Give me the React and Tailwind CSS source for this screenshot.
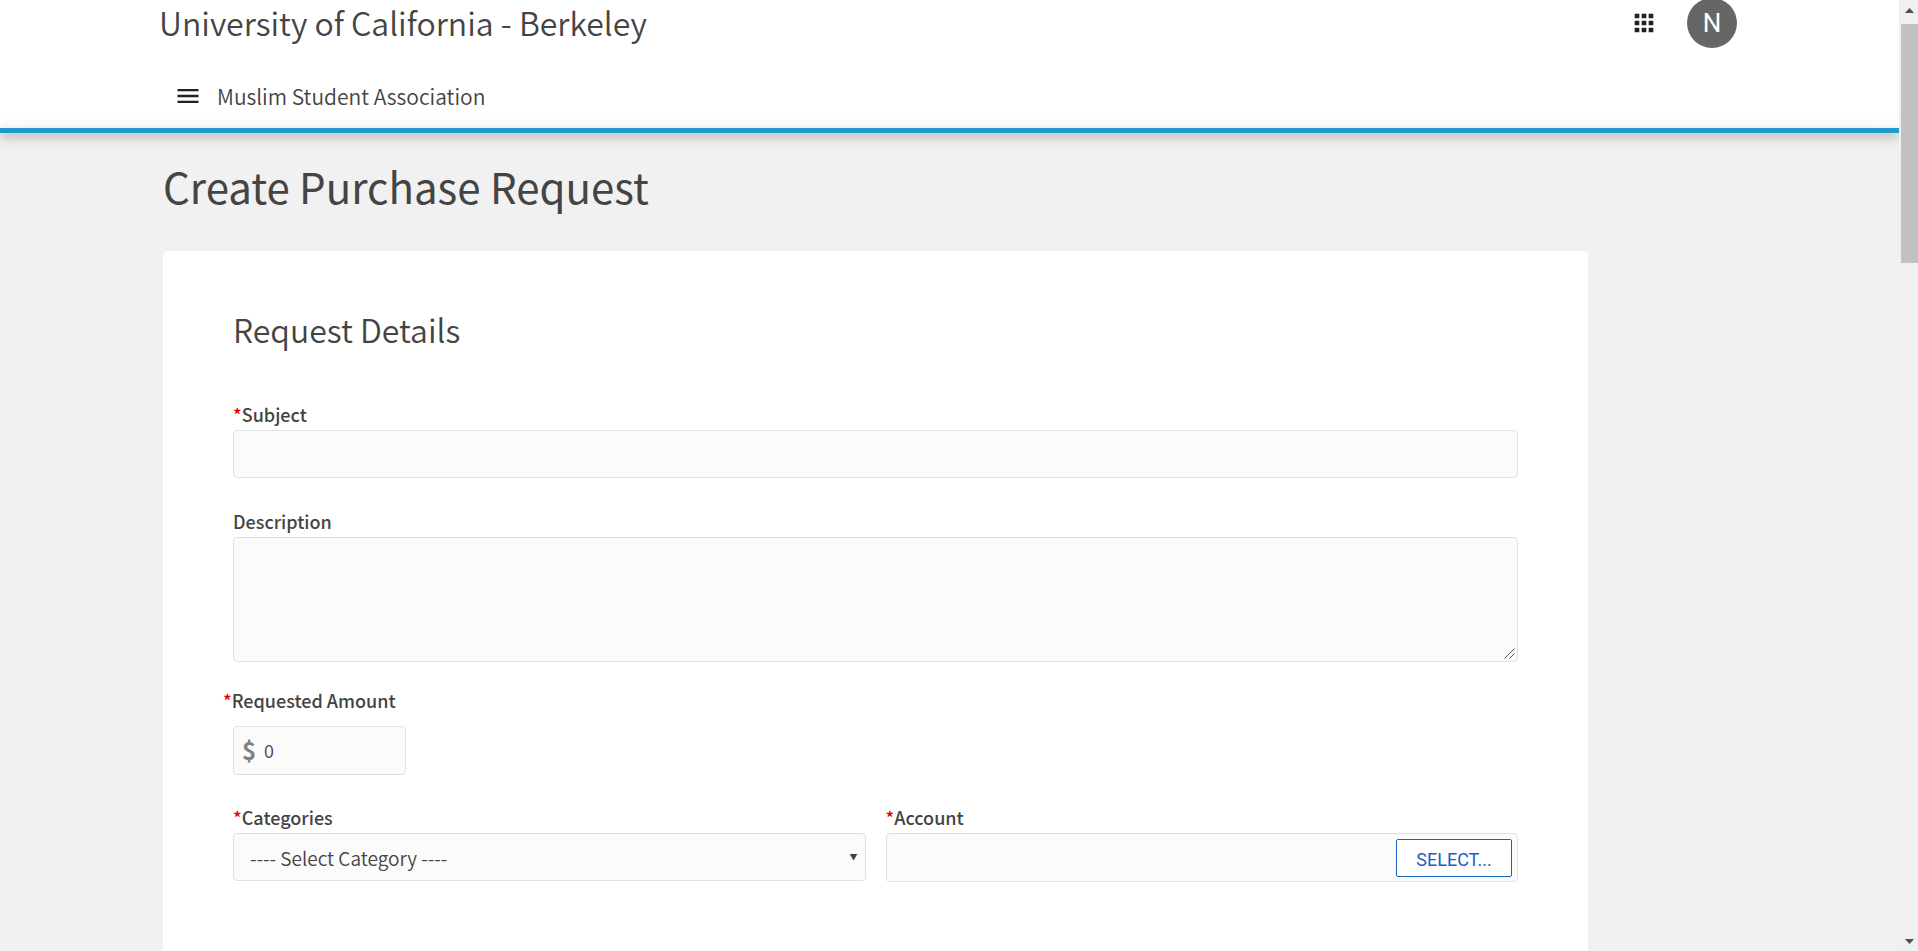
import { MdMenu, MdApps } from 'react-icons/md';

const inputBase = 'w-full rounded-[4px] border border-[#e0e0e0] bg-[#fbfbfb] px-4 text-[#444] focus:outline-none';

const Label = ({ htmlFor, required, className = '', children }) => (
  <label htmlFor={htmlFor} className={`block text-lg leading-8 font-medium text-[#444] ${className}`}>
    {required && <span className="text-[#e00000]">*</span>}
    {children}
  </label>
);

const Header = () => (
  <header className="bg-white">
    <div className="mx-auto max-w-[1581px]">
      <div className="flex h-[46px] items-center justify-between pr-[3px]">
        <a href="#" className="pb-[2px] text-[32px] leading-10 font-[350] text-[#444]">University of California - Berkeley</a>
        <div className="flex items-center gap-[29px]">
          <button type="button" aria-label="Apps" className="text-[#222]">
            <MdApps size={28} />
          </button>
          <button
            type="button"
            className="flex size-[50px] shrink-0 items-center justify-center rounded-full bg-[#666] font-[Roboto] text-[26px] text-white"
          >
            N
          </button>
        </div>
      </div>
      <nav className="flex h-[82px] items-center gap-[15px] pt-[18px] pl-[15px]">
        <button type="button" aria-label="Menu" className="text-[#222]">
          <MdMenu size={28} />
        </button>
        <a href="#" className="text-[21px] leading-8 font-[350] text-[#444]">Muslim Student Association</a>
      </nav>
    </div>
    <div className="h-[5px] bg-[#2199ca] shadow-[0_4px_8px_rgba(0,0,0,0.25),0_4px_20px_rgba(0,0,0,0.15)]" />
  </header>
);

const Scrollbar = () => (
  <div className="flex w-[19px] shrink-0 flex-col items-center bg-[#f0f0f0] pl-[2px]">
    <svg viewBox="0 0 17 24" className="h-6 w-[17px]" fill="#505050">
      <path d="M4 13L8.5 8L13 13Z" />
    </svg>
    <div className="h-[239px] w-full bg-[#c1c1c1]" />
    <svg viewBox="0 0 17 24" className="mt-auto h-6 w-[17px]" fill="#505050">
      <path d="M4 12L8.5 17L13 12Z" />
    </svg>
  </div>
);

const App = () => {
  return (
    <div className="flex min-h-screen bg-[#f1f1f1] font-['Noto_Sans_CJK_SC',sans-serif]">
      <div className="flex flex-1 flex-col overflow-hidden">
        <Header />
        <div className="mx-auto flex w-full max-w-[1581px] flex-1 flex-col pl-1">
          <h1 className="pt-[22px] pb-[34px] text-[42px] leading-[62px] text-[#444]">Create Purchase Request</h1>
          <form className="mr-[152px] flex-1 rounded-t-[4px] bg-white px-[70px] pt-[58px]">
            <h2 className="mb-12 text-[32px] leading-[41px] font-[350] text-[#444]">Request Details</h2>

            <div>
              <Label htmlFor="subject" required>Subject</Label>
              <input id="subject" type="text" className={`${inputBase} block h-12`} />
            </div>

            <div className="mt-[27px]">
              <Label htmlFor="description">Description</Label>
              <div className="relative">
                <textarea id="description" className={`${inputBase} block h-[125px] resize-none`} />
                {/* resize grip */}
                <svg viewBox="0 0 11 11" className="pointer-events-none absolute right-[3px] bottom-[3px] size-[11px]" stroke="#555" fill="none">
                  <path d="M0.5 10.5L10.5 0.5M5.5 10.5L10.5 5.5" />
                </svg>
              </div>
            </div>

            <div className="mt-[22px]">
              <Label htmlFor="amount" required className="-ml-[10px]">Requested Amount</Label>
              <div className="mt-[10px] flex h-[49px] w-[173px] items-center rounded-[4px] border border-[#e0e0e0] bg-[#fbfbfb] px-2 pb-[2px]">
                <span className="w-[22px] text-2xl font-bold text-[#808080]">$</span>
                <input id="amount" type="text" defaultValue="0" className="min-w-0 flex-1 text-lg font-[350] text-[#444] focus:outline-none" />
              </div>
            </div>

            <div className="mt-[26px] grid grid-cols-2 gap-5">
              <div>
                <Label htmlFor="category" required>Categories</Label>
                <div className="relative">
                  <select id="category" className={`${inputBase} block h-12 appearance-none pt-[2px] text-[19px] font-[350]`}>
                    <option>---- Select Category ----</option>
                  </select>
                  <span className="pointer-events-none absolute top-4 right-2 text-[8px] leading-4 text-[#444]">▼</span>
                </div>
              </div>
              <div>
                <Label htmlFor="account" required>Account</Label>
                <div className="flex h-[49px] items-center rounded-[4px] border border-[#e0e0e0] bg-[#fbfbfb] pr-[5px]">
                  <input id="account" type="text" className="h-full min-w-0 flex-1 px-4 text-lg text-[#444] focus:outline-none" />
                  <button
                    type="button"
                    className="h-[38px] w-[116px] rounded-[2px] border border-[#1565c0] bg-white pt-1 font-[Roboto] text-lg text-[#1f5cc0]"
                  >
                    SELECT...
                  </button>
                </div>
              </div>
            </div>
          </form>
        </div>
      </div>
      <Scrollbar />
    </div>
  );
};

export default App;
